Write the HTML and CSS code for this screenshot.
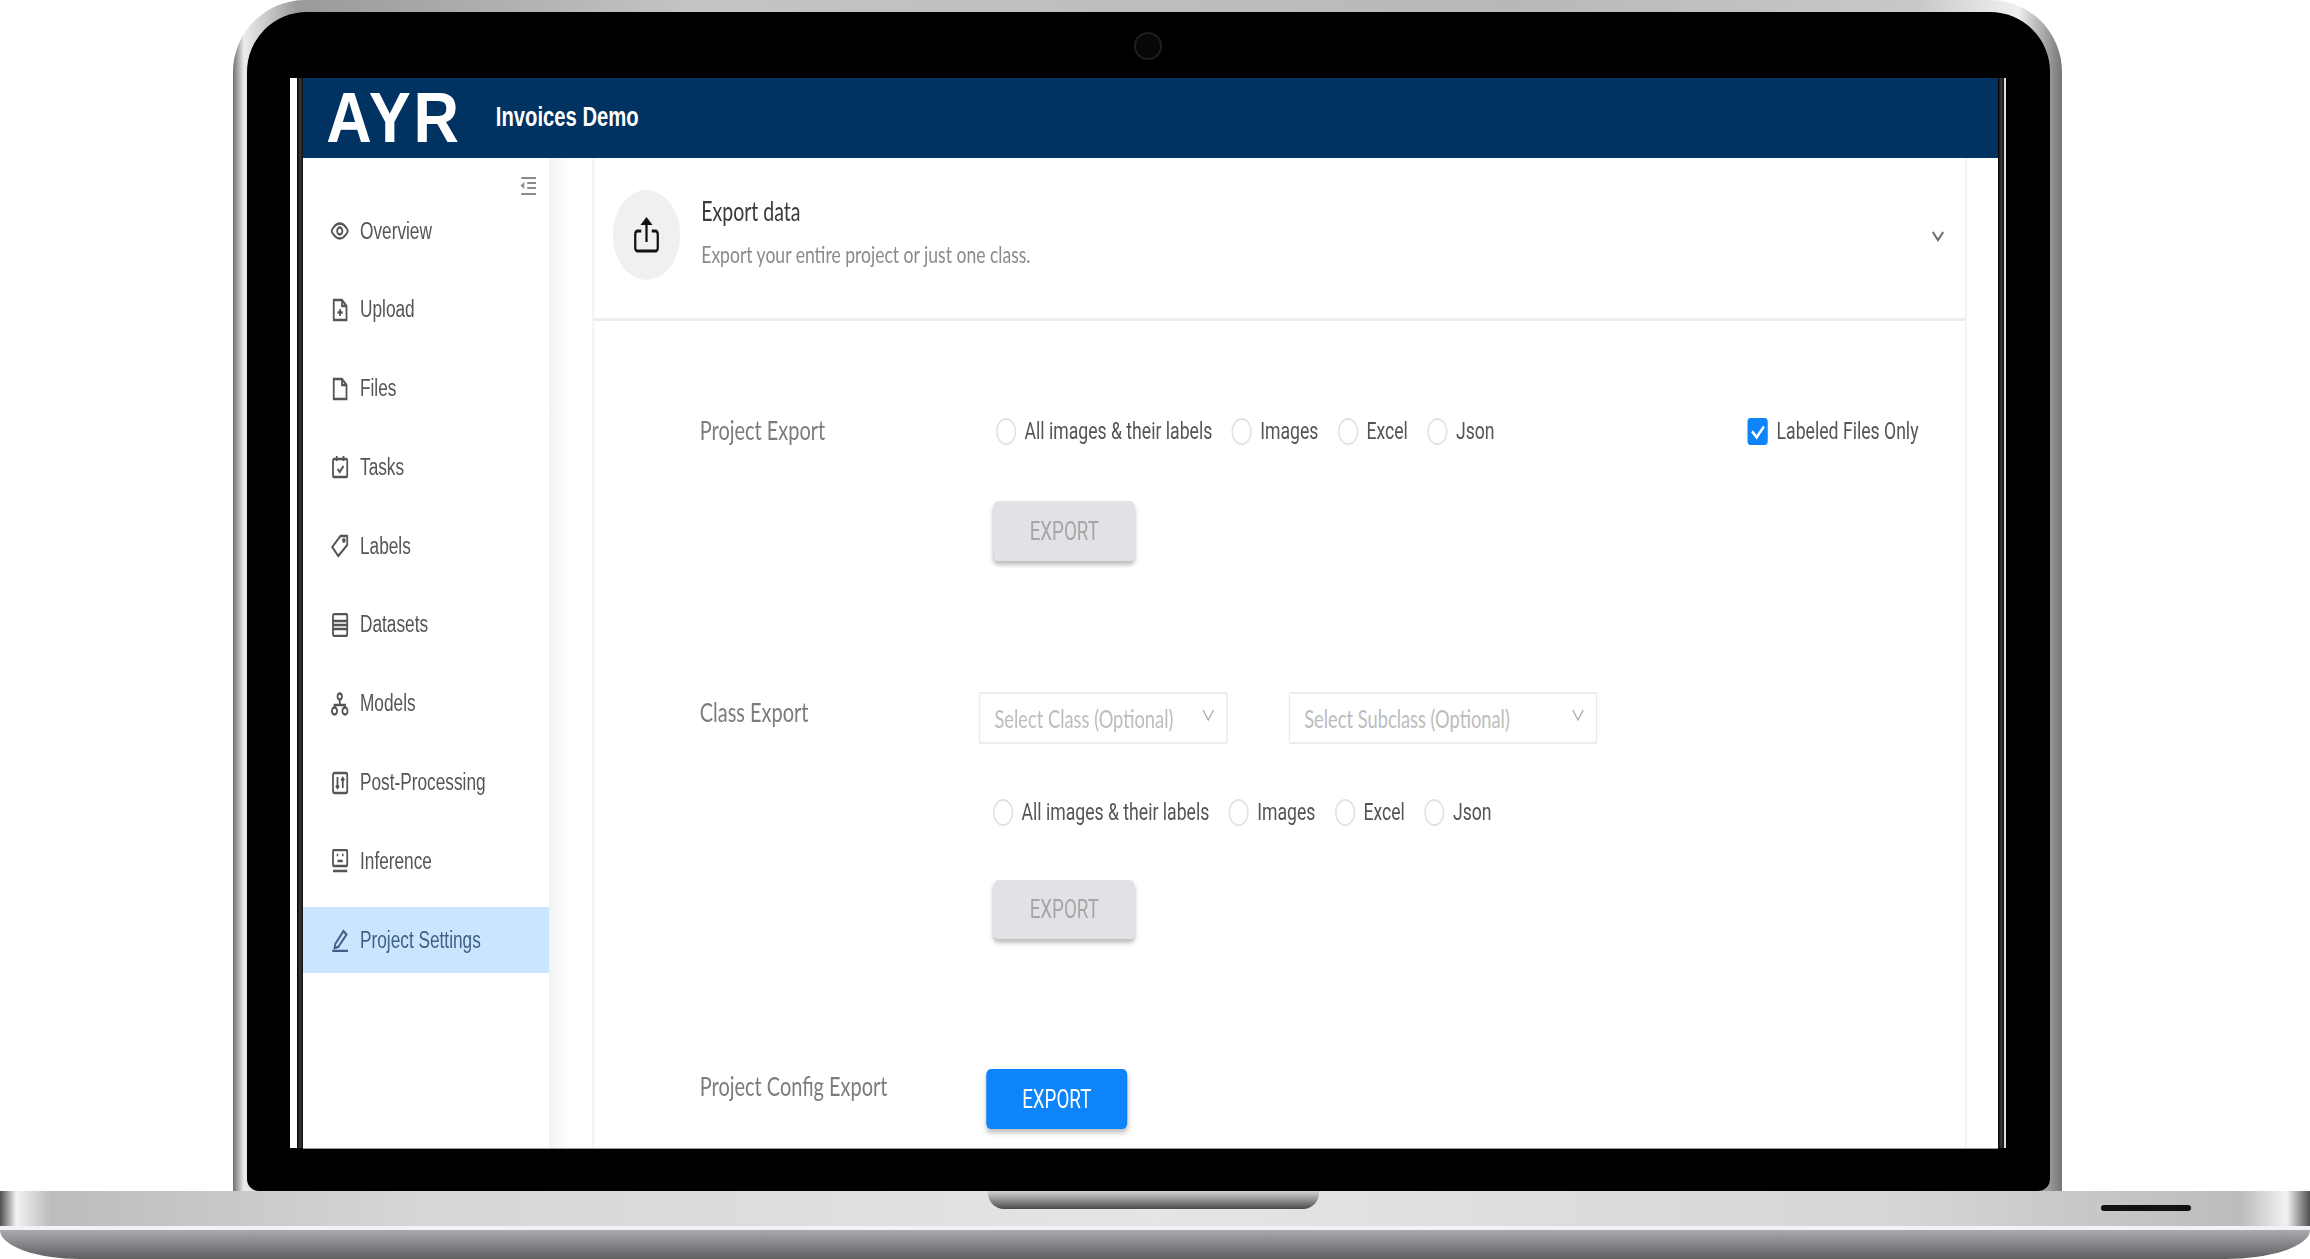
FILE: index.html
```html
<!DOCTYPE html>
<html lang="en">
<head>
    <meta charset="UTF-8">
    <title>AYR Invoices Demo</title>
    <link rel="stylesheet" href="styles.css">
</head>
<body>
    <div class="lid">
        <div class="bezel">
            <span class="camera"></span>
            <div class="edge-white-left"></div>
            <div class="edge-dark"></div>
            <div class="viewport">
                <div class="app">
                    <header class="topbar">
                        <span class="logo-box"><span class="logo">AYR</span></span>
                        <span class="project-name">Invoices Demo</span>
                    </header>
                    <div class="app-body">
                        <nav class="sidebar">
                            <div class="collapse-row">
                                <svg class="collapse-icon" viewBox="0 0 22 20"><path d="M2 2h20M10 7h12M10 12h12M2 18h20"/><path class="solid" d="M6 6v7l-5-3.5z"/></svg>
                            </div>
                            <a class="nav-item">
                                <svg class="nav-icon" viewBox="0 0 24 24"><path d="M1 12s4-7.5 11-7.5S23 12 23 12s-4 7.5-11 7.5S1 12 1 12z"/><circle cx="12" cy="12" r="3.5"/></svg>
                                Overview
                            </a>
                            <a class="nav-item">
                                <svg class="nav-icon" viewBox="0 0 24 24"><path d="M4 2h11l6 6v14H4z"/><path d="M15 2v6h6M12.500 11v7M9 14.500h7"/></svg>
                                Upload
                            </a>
                            <a class="nav-item">
                                <svg class="nav-icon" viewBox="0 0 24 24"><path d="M4 2h11l6 6v14H4z"/><path d="M15 2v6h6"/></svg>
                                Files
                            </a>
                            <a class="nav-item">
                                <svg class="nav-icon" viewBox="0 0 24 24"><rect x="3" y="4" width="19" height="18" rx="1.500"/><path d="M8 1v5M17 1v5M9 14l3 3 5-6"/></svg>
                                Tasks
                            </a>
                            <a class="nav-item">
                                <svg class="nav-icon" viewBox="0 0 24 24"><path d="M13 2h9v9L10 22 2 13z"/><circle cx="17.500" cy="6.500" r="1.200"/></svg>
                                Labels
                            </a>
                            <a class="nav-item">
                                <svg class="nav-icon" viewBox="0 0 24 24"><rect x="3" y="1" width="19" height="22" rx="2"/><path d="M3 8h19M3 12h19M3 16h19"/></svg>
                                Datasets
                            </a>
                            <a class="nav-item">
                                <svg class="nav-icon" viewBox="0 0 24 24"><circle cx="12" cy="4.500" r="3"/><circle cx="5" cy="19" r="3.500"/><circle cx="19" cy="19" r="3.500"/><path d="M12 8v5M5 15.500V13h14v2.500"/></svg>
                                Models
                            </a>
                            <a class="nav-item">
                                <svg class="nav-icon" viewBox="0 0 24 24"><rect x="3" y="2" width="19" height="20" rx="2"/><path d="M9 6v11M7 14.500l2 2.500 2-2.500M16 17V7M14 9.500L16 7l2 2.500"/></svg>
                                Post-Processing
                            </a>
                            <a class="nav-item">
                                <svg class="nav-icon" viewBox="0 0 24 24"><rect x="3" y="1" width="19" height="16" rx="1.500"/><path d="M3 22h19M8 6h2M15 6h2M9 12h7"/></svg>
                                Inference
                            </a>
                            <a class="nav-item nav-item-active">
                                <svg class="nav-icon" viewBox="0 0 24 24"><path d="M6 16L17 3l4 3.500L10 19l-5 1z"/><path d="M2 23h21"/></svg>
                                Project Settings
                            </a>
                        </nav>
                        <main class="main">
                            <section class="card">
                                <div class="card-head">
                                    <div class="head-circle">
                                        <svg class="share-icon" viewBox="0 0 34 36"><path d="M10 14H5a3 3 0 0 0-3 3v14a3 3 0 0 0 3 3h24a3 3 0 0 0 3-3V17a3 3 0 0 0-3-3h-5"/><path d="M17 25V3"/><path class="solid" d="M17 0l8 8H9z"/></svg>
                                    </div>
                                    <div class="head-text">
                                        <h2 class="head-title">Export data</h2>
                                        <p class="head-sub">Export your entire project or just one class.</p>
                                    </div>
                                    <svg class="head-chevron" viewBox="0 0 18 12"><path d="M2 2l7 8 7-8"/></svg>
                                </div>
                                <div class="card-body">
                                    <div class="export-section">
                                        <div class="export-row">
                                            <div class="export-label">Project Export</div>
                                            <div class="export-controls export-controls-wide">
                                                <div class="options options-first">
                                                    <label class="option"><input type="radio" name="project">All images &amp; their labels</label>
                                                    <label class="option"><input type="radio" name="project">Images</label>
                                                    <label class="option"><input type="radio" name="project">Excel</label>
                                                    <label class="option"><input type="radio" name="project">Json</label>
                                                    <label class="option option-check"><input type="checkbox" checked>Labeled Files Only</label>
                                                </div>
                                                <button class="btn btn-disabled btn-gap" type="button">EXPORT</button>
                                            </div>
                                        </div>
                                    </div>
                                    <div class="export-section">
                                        <div class="export-row">
                                            <div class="export-label export-label-select">Class Export</div>
                                            <div class="export-controls">
                                                <div class="selects">
                                                    <div class="select-box select-class">Select Class (Optional)<svg class="select-chevron" viewBox="0 0 16 12"><path d="M1 1l7 10 7-10"/></svg></div>
                                                    <div class="select-box select-subclass">Select Subclass (Optional)<svg class="select-chevron" viewBox="0 0 16 12"><path d="M1 1l7 10 7-10"/></svg></div>
                                                </div>
                                                <div class="options options-second">
                                                    <label class="option"><input type="radio" name="class">All images &amp; their labels</label>
                                                    <label class="option"><input type="radio" name="class">Images</label>
                                                    <label class="option"><input type="radio" name="class">Excel</label>
                                                    <label class="option"><input type="radio" name="class">Json</label>
                                                </div>
                                                <button class="btn btn-disabled btn-gap" type="button">EXPORT</button>
                                            </div>
                                        </div>
                                    </div>
                                    <div class="export-section">
                                        <div class="export-row">
                                            <div class="export-label export-label-config">Project Config Export</div>
                                            <button class="btn btn-primary" type="button">EXPORT</button>
                                        </div>
                                    </div>
                                </div>
                            </section>
                        </main>
                    </div>
                </div>
            </div>
            <div class="edge-dark"></div>
            <div class="edge-white-right"></div>
        </div>
    </div>
    <div class="base">
        <div class="base-top">
            <span class="notch"></span>
            <span class="slot"></span>
        </div>
        <div class="base-line"></div>
        <div class="base-bottom"></div>
    </div>
</body>
</html>
```

FILE: styles.css
```css
html, body {
    margin: 0;
    padding: 0;
    width: 2310px;
    height: 1259px;
    overflow: hidden;
    background: #fff;
}

body {
    font-family: "Liberation Sans", sans-serif;
}

/* laptop frame */
.lid {
    box-sizing: border-box;
    width: 1829px;
    height: 1191px;
    margin-left: 233px;
    padding: 12px 12px 0 14px;
    border-radius: 72px 72px 0 0;
    background: linear-gradient(90deg, #707070 0, #ececec 0.6%, #9a9a9a 3.5%, #c4c4c4 25%, #b8b8b8 70%, #c8c8c8 92%, #f0f0f0 97.6%, #767676 100%);
}

.bezel {
    position: relative;
    box-sizing: border-box;
    display: flex;
    height: 1179px;
    padding: 66px 44px 43px 43px;
    background: #000;
    border-radius: 60px 60px 12px 12px;
}

.camera {
    position: absolute;
    top: 20px;
    left: 887px;
    width: 28px;
    height: 28px;
    box-sizing: border-box;
    border: 2px solid #1e1e1e;
    border-radius: 50%;
    background: #070707;
}

.edge-white-left {
    width: 7px;
    background: #fff;
}

.edge-white-right {
    width: 2px;
    background: #ddd;
}

.edge-dark {
    width: 6px;
    background: linear-gradient(90deg, #000 0, #3a3a3a 50%, #111 100%);
}

.viewport {
    width: 1695px;
    height: 1070px;
    overflow: hidden;
    background: #fff;
    border-bottom: 1px solid #999;
}

/* the capture is squeezed horizontally, so the app is laid out wide and scaled */
.app {
    width: 2260px;
    height: 1070px;
    transform: scaleX(0.75);
    transform-origin: 0 0;
    filter: blur(0.6px);
}

.topbar {
    display: flex;
    align-items: center;
    height: 80px;
    padding-left: 31px;
    background: #003262;
    color: #fff;
    font-weight: bold;
}

.logo-box {
    width: 226px;
}

.logo {
    display: inline-block;
    font-size: 70px;
    letter-spacing: 3px;
    line-height: 80px;
    transform: scaleX(1.200);
    transform-origin: 0 50%;
}

.project-name {
    font-size: 27px;
    margin-bottom: 2px;
}

.app-body {
    display: flex;
    height: 990px;
}

/* sidebar */
.sidebar {
    flex: 0 0 328px;
    color: #555;
    font-size: 23px;
}

.collapse-row {
    display: flex;
    justify-content: flex-end;
    height: 40px;
    padding: 18px 17px 0 0;
    box-sizing: border-box;
}

.collapse-icon {
    width: 22px;
    height: 20px;
    fill: none;
    stroke: #8a8a8a;
    stroke-width: 2;
}

.collapse-icon .solid {
    fill: #8a8a8a;
    stroke: none;
}

.nav-item {
    display: flex;
    align-items: center;
    gap: 15px;
    height: 66px;
    margin-bottom: 12.800px;
    padding-left: 37px;
}

.nav-item-active {
    background: #cce5fe;
    color: #3e5f86;
}

.nav-icon {
    flex: none;
    width: 24px;
    height: 24px;
    fill: none;
    stroke: currentColor;
    stroke-width: 2.400;
}

/* main */
.main {
    flex: 1;
    padding: 0 42px 0 58px;
    background: linear-gradient(90deg, #f2f2f2 0, #fff 30px);
}

.card {
    height: 100%;
    background: #fff;
    border-left: 2px solid #efefef;
    border-right: 2px solid #efefef;
}

.card-head {
    display: flex;
    align-items: flex-start;
    height: 163px;
    box-sizing: border-box;
    padding: 32px 27px 0 25px;
    border-bottom: 3px solid #ececec;
}

.head-circle {
    flex: none;
    display: flex;
    align-items: center;
    justify-content: center;
    width: 90px;
    height: 90px;
    border-radius: 50%;
    background: #f0f0f0;
}

.share-icon {
    width: 34px;
    height: 36px;
    fill: none;
    stroke: #111;
    stroke-width: 3;
}

.share-icon .solid {
    fill: #111;
    stroke: none;
}

.head-text {
    flex: 1;
    margin-left: 28px;
    font-family: "Lato", sans-serif;
}

.head-title {
    margin: 4px 0 0;
    font-size: 26px;
    font-weight: normal;
    line-height: 34px;
    color: #3a3a3a;
}

.head-sub {
    margin: 11px 0 0;
    font-size: 23.400px;
    line-height: 30px;
    color: #8a8a8a;
}

.head-chevron {
    width: 18px;
    height: 12px;
    margin-top: 40px;
    fill: none;
    stroke: #6e6e6e;
    stroke-width: 2.500;
}

.card-body {
    padding: 94px 62px 0 141px;
    font-family: "Lato", sans-serif;
}

.export-section:nth-child(1) {
    margin-bottom: 131px;
}

.export-section:nth-child(2) {
    margin-bottom: 130px;
}

.export-row {
    display: flex;
    align-items: flex-start;
}

.export-label {
    flex: 0 0 372px;
    font-size: 26.600px;
    line-height: 30px;
    color: #7c7c7c;
}

.export-label-select {
    line-height: 40px;
}

.export-label-config {
    flex-basis: 382px;
    line-height: 34px;
}

.export-controls {
    display: flex;
    flex-direction: column;
    align-items: flex-start;
}

.export-controls-wide {
    flex: 1;
}

.options {
    display: flex;
    align-items: center;
    height: 32px;
    font-family: "Roboto", sans-serif;
}

.options-first {
    align-self: stretch;
    margin-left: 23px;
}

.options-second {
    margin: 52px 0 0 19px;
}

.option {
    display: flex;
    align-items: center;
    gap: 11px;
    margin-right: 26px;
    font-size: 23.500px;
    color: #555;
}

.option-check {
    margin: 0 0 0 auto;
    gap: 12px;
}

.option input {
    appearance: none;
    box-sizing: border-box;
    width: 27px;
    height: 27px;
    margin: 0;
    border: 2px solid #e2e2e2;
    border-radius: 50%;
    background: #fff;
}

.option input[type="checkbox"] {
    position: relative;
    border: 0;
    border-radius: 4px;
    background: #0d84fa;
}

.option input[type="checkbox"]::after {
    content: "";
    position: absolute;
    left: 9px;
    top: 4px;
    width: 7px;
    height: 13px;
    border: solid #fff;
    border-width: 0 3px 3px 0;
    transform: rotate(42deg);
}

.btn {
    display: block;
    width: 188px;
    height: 60px;
    padding: 0;
    border: 0;
    border-radius: 6px;
    font-family: "Roboto", sans-serif;
    font-size: 25px;
}

.btn-gap {
    margin: 54px 0 0 20px;
}

.options-second + .btn-gap {
    margin-top: 52px;
    height: 59px;
}

.btn-disabled {
    background: #e0e2e6;
    color: #a6a6a6;
    box-shadow: 0 4px 5px rgba(0, 0, 0, 0.25);
}

.btn-primary {
    background: #0d84fa;
    color: #fff;
    box-shadow: 0 4px 6px rgba(0, 0, 0, 0.25);
}

.selects {
    display: flex;
    gap: 81px;
}

.select-box {
    display: flex;
    align-items: center;
    justify-content: space-between;
    box-sizing: border-box;
    height: 52px;
    padding: 0 16px 0 19px;
    border: 2px solid #ececec;
    border-radius: 3px;
    background: #fff;
    font-size: 24.400px;
    color: #bcbcbc;
}

.select-class {
    width: 332px;
}

.select-subclass {
    width: 412px;
}

.select-chevron {
    width: 16px;
    height: 12px;
    margin-bottom: 6px;
    fill: none;
    stroke: #aaa;
    stroke-width: 1.500;
}

/* laptop base */
.base {
    width: 2310px;
    height: 68px;
}

.base-top {
    position: relative;
    height: 35px;
    background: linear-gradient(90deg, #505050 0, #f2f2f2 0.7%, #bbbcbe 2.200%, #d5d6d8 18%, #e4e5e7 50%, #d5d6d8 82%, #bbbcbe 97%, #f2f2f2 99%, #505050 100%);
}

.notch {
    position: absolute;
    top: 0;
    left: 988px;
    width: 331px;
    height: 18px;
    border-radius: 0 0 16px 16px;
    background: linear-gradient(180deg, #d4d4d4 0, #909090 50%, #4a4a4a 100%);
}

.slot {
    position: absolute;
    top: 14px;
    left: 2101px;
    width: 90px;
    height: 6px;
    border-radius: 3px;
    background: #111;
}

.base-line {
    height: 4px;
    background: #f1f2f4;
}

.base-bottom {
    height: 29px;
    border-radius: 0 0 85px 80px / 0 0 29px 29px;
    background: linear-gradient(180deg, #a9aaaf 0, #5e5f61 100%);
}
```
